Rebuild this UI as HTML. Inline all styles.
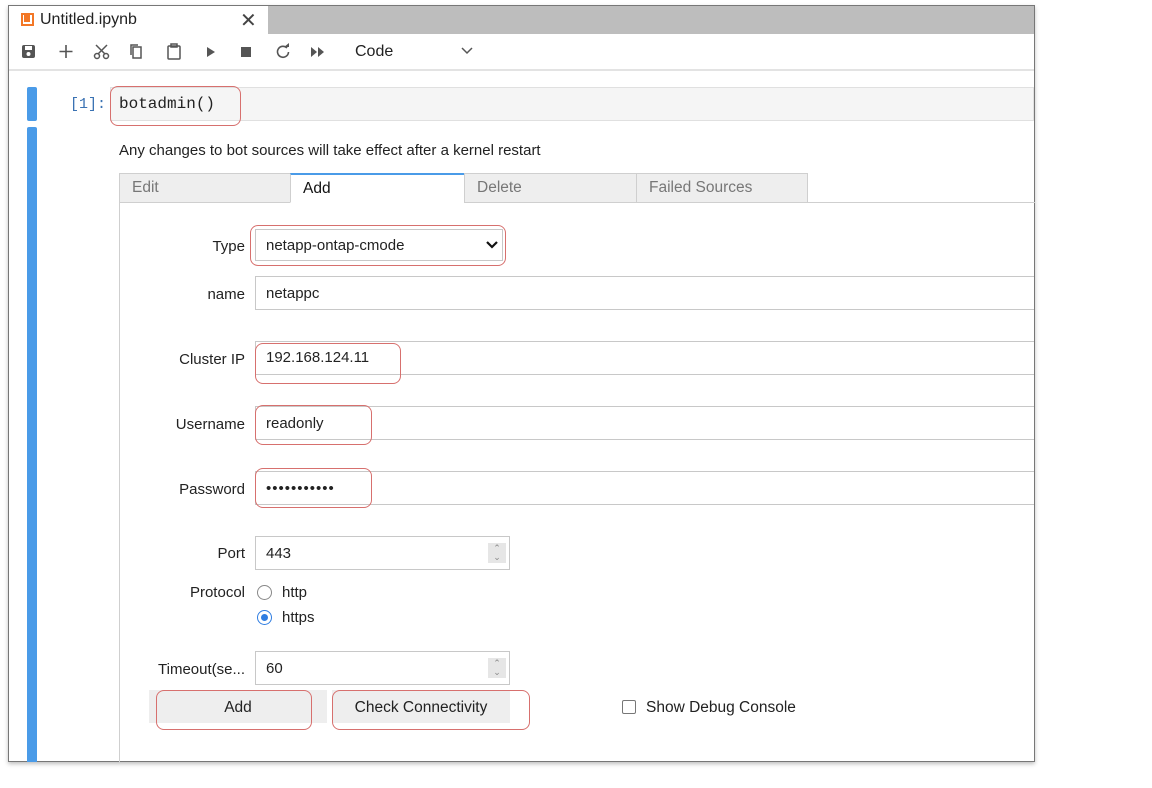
<!DOCTYPE html>
<html><head><meta charset="utf-8"><style>
*{box-sizing:border-box;margin:0;padding:0}
body{width:1152px;height:788px;background:#fff;position:relative;overflow:hidden;font-family:"Liberation Sans",sans-serif;font-size:15px;color:#222}
.a{position:absolute}
.win{left:8px;top:5px;width:1027px;height:757px;border:1px solid #777;box-shadow:0 2px 4px rgba(0,0,0,.25);background:#fff;overflow:hidden}
.red{position:absolute;border:1.5px solid #d7706e;border-radius:8px}
.inp{position:absolute;border:1px solid #c8c8c8;background:#fff;height:34px;padding-left:10px;line-height:34px}
.lbl{position:absolute;text-align:right;width:120px;left:125px}
.tab{position:absolute;top:173px;height:30px;border:1px solid #cfcfcf;background:#eee;color:#777;padding-left:12px;line-height:27px;font-size:15.5px}
.spin{position:absolute;right:3px;top:6px;width:18px;height:20px;background:#e6e6e6;font-size:9px;line-height:9px;text-align:center;color:#888;padding-top:1px}
</style></head><body>
<div class="a win">
 <div class="a" style="left:259px;top:0;width:770px;height:28px;background:#bdbdbd"></div>
 <div class="a" style="left:0;top:63px;width:1030px;height:2px;background:#e3e3e3"></div>
</div>
<div class="a" style="left:21px;top:13px;width:13px;height:13px;background:#f37726;"><div class="a" style="left:2px;top:2px;width:9px;height:9px;background:#fff"><div class="a" style="left:1px;top:0;width:6px;height:7px;background:#f37726"></div></div></div>
<div class="a" style="left:40px;top:11px;font-size:16px">Untitled.ipynb</div>
<div class="a" style="left:240px;top:8px;font-size:20px;color:#444">✕</div>
<svg class="a" style="left:18px;top:40px" width="340" height="24" fill="#555" stroke="#555">
 <rect x="4" y="5" width="13" height="13" rx="2" stroke="none"/><rect x="7" y="6" width="7" height="4" fill="#fff" stroke="none"/><circle cx="10.5" cy="14" r="2" fill="#fff" stroke="none"/>
 <path d="M48 5v13M41.5 11.5h13" stroke-width="1.6" fill="none"/>
 <g fill="none" stroke-width="1.5"><circle cx="79" cy="16" r="2.5"/><circle cx="88" cy="16" r="2.5"/><path d="M80 14L89 5M87 14L78 5"/></g>
 <g fill="none" stroke-width="1.5"><rect x="115" y="7" width="8" height="11"/><path d="M113 15V5h7"/></g>
 <g fill="none" stroke-width="1.5"><rect x="150" y="6" width="12" height="13" rx="1"/><rect x="153" y="4" width="6" height="3"/></g>
 <path d="M189 7l8 5-8 5z" stroke="none"/>
 <rect x="223" y="7" width="10" height="10" stroke="none"/>
 <path d="M269 8a5.5 5.5 0 1 0 1.5 4" fill="none" stroke-width="1.6"/><path d="M266 7h5v-4z" stroke="none"/>
 <path d="M293 7l6 5-6 5zM300 7l6 5-6 5z" stroke="none"/>
</svg>
<div class="a" style="left:355px;top:43px;font-size:16px">Code</div>
<svg class="a" style="left:460px;top:46px" width="14" height="10"><path d="M2 2l5 5 5-5" fill="none" stroke="#555" stroke-width="1.5"/></svg>

<div class="a" style="left:27px;top:87px;width:10px;height:34px;background:#4a9be8;border-radius:2px"></div>
<div class="a" style="left:27px;top:127px;width:10px;height:635px;background:#4a9be8;border-radius:2px 2px 0 0"></div>
<div class="a" style="left:70px;top:96px;font-family:'Liberation Mono',monospace;color:#3a72b3;font-size:15px">[1]:</div>
<div class="a" style="left:110px;top:87px;width:924px;height:34px;background:#f5f5f5;border:1px solid #e0e0e0"></div>
<div class="a" style="left:119px;top:95px;font-family:'Liberation Mono',monospace;font-size:16px">botadmin()</div>
<div class="red" style="left:110px;top:86px;width:131px;height:40px"></div>

<div class="a" style="left:119px;top:142px">Any changes to bot sources will take effect after a kernel restart</div>
<div class="a" style="left:119px;top:202px;width:916px;height:1px;background:#cfcfcf"></div>
<div class="a" style="left:119px;top:202px;width:1px;height:560px;background:#cfcfcf"></div>
<div class="tab" style="left:119px;width:172px">Edit</div>
<div class="tab" style="left:290px;width:175px;background:#fff;color:#111;border-top:2px solid #4a9be8;border-bottom-color:#fff">Add</div>
<div class="tab" style="left:464px;width:173px">Delete</div>
<div class="tab" style="left:636px;width:172px">Failed Sources</div>

<div class="lbl" style="top:238px">Type</div>
<div class="inp" style="left:255px;top:229px;width:248px;height:32px;line-height:32px">netapp-ontap-cmode</div>
<svg class="a" style="left:485px;top:240px" width="14" height="10"><path d="M2 2l5 5 5-5" fill="none" stroke="#111" stroke-width="2.2"/></svg>
<div class="red" style="left:250px;top:225px;width:256px;height:41px"></div>

<div class="lbl" style="top:286px">name</div>
<div class="inp" style="left:255px;top:276px;width:779px;border-right:none">netappc</div>
<div class="lbl" style="top:351px">Cluster IP</div>
<div class="inp" style="left:255px;top:341px;width:779px;border-right:none;line-height:32px">192.168.124.11</div>
<div class="red" style="left:255px;top:343px;width:146px;height:41px"></div>
<div class="lbl" style="top:416px">Username</div>
<div class="inp" style="left:255px;top:406px;width:779px;border-right:none">readonly</div>
<div class="red" style="left:255px;top:405px;width:117px;height:40px"></div>
<div class="lbl" style="top:481px">Password</div>
<div class="inp" style="left:255px;top:471px;width:779px;border-right:none;letter-spacing:1px">•••••••••••</div>
<div class="red" style="left:255px;top:468px;width:117px;height:40px"></div>

<div class="lbl" style="top:545px">Port</div>
<div class="inp" style="left:255px;top:536px;width:255px">443<div class="spin">⌃<br>⌄</div></div>
<div class="lbl" style="top:584px">Protocol</div>
<div class="a" style="left:257px;top:585px;width:15px;height:15px;border:1.5px solid #888;border-radius:50%"></div>
<div class="a" style="left:282px;top:584px">http</div>
<div class="a" style="left:257px;top:610px;width:15px;height:15px;border:1.5px solid #2f7de1;border-radius:50%"><div class="a" style="left:2.5px;top:2.5px;width:7px;height:7px;background:#2f7de1;border-radius:50%"></div></div>
<div class="a" style="left:282px;top:609px">https</div>
<div class="lbl" style="top:661px">Timeout(se...</div>
<div class="inp" style="left:255px;top:651px;width:255px">60<div class="spin">⌃<br>⌄</div></div>

<div class="a" style="left:149px;top:690px;width:178px;height:33px;background:#eee;text-align:center;line-height:35px;font-size:15.5px">Add</div>
<div class="red" style="left:156px;top:690px;width:156px;height:40px"></div>
<div class="a" style="left:332px;top:690px;width:178px;height:33px;background:#eee;text-align:center;line-height:35px;font-size:15.5px">Check Connectivity</div>
<div class="red" style="left:332px;top:690px;width:198px;height:40px"></div>
<div class="a" style="left:622px;top:700px;width:14px;height:14px;border:1px solid #777;border-radius:2px"></div>
<div class="a" style="left:646px;top:699px;font-size:15.5px">Show Debug Console</div>
</body></html>
